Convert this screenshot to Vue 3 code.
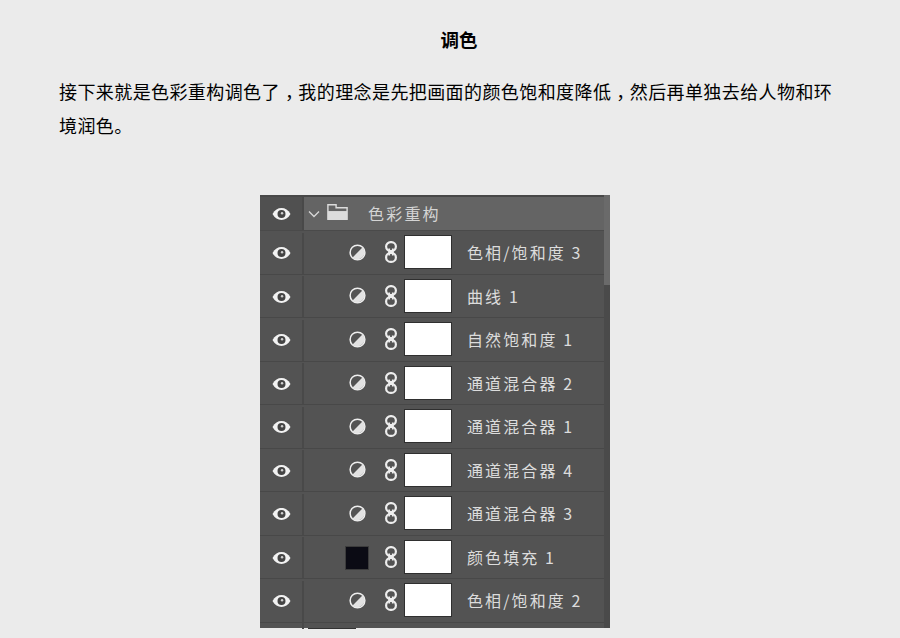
<script setup>
const layers = [
  { name: '色相/饱和度 3', type: 'adjust' },
  { name: '曲线 1', type: 'adjust' },
  { name: '自然饱和度 1', type: 'adjust' },
  { name: '通道混合器 2', type: 'adjust' },
  { name: '通道混合器 1', type: 'adjust' },
  { name: '通道混合器 4', type: 'adjust' },
  { name: '通道混合器 3', type: 'adjust' },
  { name: '颜色填充 1', type: 'fill' },
  { name: '色相/饱和度 2', type: 'adjust' },
]
</script>

<template>
  <div class="page">
    <h1 class="title">调色</h1>
    <p class="intro">接下来就是色彩重构调色了<span class="comma">，</span>我的理念是先把画面的颜色饱和度降低<span class="comma">，</span>然后再单独去给人物和环<br>境润色。</p>

    <div class="panel">
      <div class="list">
        <div class="row group">
          <div class="eye-cell">
            <svg class="eye" viewBox="0 0 20 14"><path d="M0.5 7C3 2.6 6.2 0.8 10 0.8S17 2.6 19.5 7C17 11.4 13.8 13.2 10 13.2S3 11.4 0.5 7Z" fill="#f2f2f2"/><circle cx="10" cy="7" r="4.2" fill="#444"/><circle cx="10.6" cy="6.2" r="1.3" fill="#cfcfcf"/></svg>
          </div>
          <div class="group-body">
            <svg class="chevron" viewBox="0 0 12 8"><path d="M1 1.5L6 6.5L11 1.5" fill="none" stroke="#d8d8d8" stroke-width="1.3"/></svg>
            <svg class="folder" viewBox="0 0 22 17"><path d="M0.8 16.2V0.8H9.5V4H21.2V16.2Z" fill="none" stroke="#dcdcdc" stroke-width="1.5"/><path d="M0.8 7.5H21.2V16.2H0.8Z" fill="#dcdcdc"/></svg>
            <span class="group-name">色彩重构</span>
          </div>
        </div>

        <div v-for="layer in layers" :key="layer.name" class="row">
          <div class="eye-cell">
            <svg class="eye" viewBox="0 0 20 14"><path d="M0.5 7C3 2.6 6.2 0.8 10 0.8S17 2.6 19.5 7C17 11.4 13.8 13.2 10 13.2S3 11.4 0.5 7Z" fill="#f2f2f2"/><circle cx="10" cy="7" r="4.2" fill="#444"/><circle cx="10.6" cy="6.2" r="1.3" fill="#cfcfcf"/></svg>
          </div>
          <div class="layer-body">
            <div class="type-slot">
              <svg v-if="layer.type === 'adjust'" class="adjust" viewBox="0 0 18 18"><circle cx="9" cy="9" r="7.8" fill="#535353" stroke="#efefef" stroke-width="1.6"/><path d="M14.5 3.5A7.8 7.8 0 0 1 3.5 14.5Z" fill="#e2e2e2"/></svg>
              <span v-else class="swatch"></span>
            </div>
            <svg class="link" viewBox="0 0 12 22"><g fill="none" stroke="#eeeeee" stroke-width="2.2"><rect x="1.1" y="1.1" width="9.8" height="9" rx="4.5"/><rect x="1.1" y="11.9" width="9.8" height="9" rx="4.5"/><path d="M4.2 7.5V14.5M7.8 7.5V14.5" stroke-width="1.8"/></g></svg>
            <span class="thumb"></span>
            <span class="layer-name">{{ layer.name }}</span>
          </div>
        </div>

        <div class="row-tail">
          <div class="tail-eye"></div>
          <div class="tail-body"><span class="tail-mark"></span></div>
        </div>
      </div>
      <div class="scroll"><span class="scroll-thumb"></span></div>
    </div>
  </div>
</template>

<style scoped>
.page {
  width: 900px;
  height: 638px;
  overflow: hidden;
  box-sizing: border-box;
  padding-top: 27px;
  background: #ebebeb;
  font-family: "Noto Sans CJK SC", "Liberation Sans", sans-serif;
  color: #000;
}
.title {
  margin: 0 0 0 18px;
  font-size: 18.5px;
  line-height: 24px;
  font-weight: 700;
  text-align: center;
}
.intro {
  width: 790px;
  margin: 23px 0 0 59px;
  font-size: 18px;
  line-height: 34px;
  letter-spacing: 0.41px;
}
.comma {
  padding: 0 4px 0 5px;
  font-feature-settings: "halt";
}
.panel {
  display: flex;
  width: 350px;
  height: 433px;
  margin: 53px 0 0 260px;
  background: #535353;
}
.list {
  flex: 1;
  min-width: 0;
}
.row {
  display: flex;
  box-sizing: border-box;
  height: 43.5px;
  padding-top: 1.5px;
  border-bottom: 1.5px solid #484848;
}
.row.group {
  height: 36px;
  padding-top: 0;
  border-top: 2px solid #484848;
  border-bottom: 1px solid #4a4a4a;
}
.eye-cell {
  display: flex;
  flex: none;
  align-items: center;
  justify-content: center;
  box-sizing: border-box;
  width: 44px;
  border-right: 2px solid #494949;
}
.group .eye-cell {
  background: #505050;
}
.eye {
  width: 19px;
  height: 14px;
}
.group-body {
  display: flex;
  flex: 1;
  align-items: center;
  padding-left: 4px;
  background: #646464;
}
.chevron {
  width: 12px;
  height: 8px;
}
.folder {
  width: 21px;
  height: 16px;
  margin: -3px 0 0 7px;
}
.group-name {
  margin: -1px 0 0 20px;
  font-size: 16px;
  letter-spacing: 2.2px;
  color: #d4d4d4;
}
.layer-body {
  display: flex;
  flex: 1;
  align-items: center;
}
.type-slot {
  display: flex;
  flex: none;
  justify-content: center;
  width: 24px;
  margin: -2px 0 0 41px;
}
.adjust {
  width: 17px;
  height: 17px;
}
.swatch {
  width: 24px;
  height: 24px;
  box-sizing: border-box;
  margin-top: 2px;
  background: #0b0b14;
  border: 1px solid #3c3c3c;
}
.link {
  flex: none;
  width: 12px;
  height: 22px;
  margin: -2px 0 0 16px;
}
.thumb {
  flex: none;
  box-sizing: border-box;
  width: 48px;
  height: 34px;
  margin: -2px 0 0 7px;
  background: #fff;
  border: 1px solid #2f2f2f;
}
.layer-name {
  margin: -2px 0 0 15px;
  font-size: 16px;
  letter-spacing: 2.1px;
  white-space: nowrap;
  color: #dcdcdc;
}
.row-tail {
  display: flex;
  height: 6px;
}
.tail-eye {
  box-sizing: border-box;
  width: 44px;
  border-right: 2px solid #494949;
}
.tail-body {
  position: relative;
  flex: 1;
}
.tail-mark {
  position: absolute;
  left: 4px;
  bottom: 0;
  width: 48px;
  height: 1px;
  background: #333;
}
.scroll {
  flex: none;
  width: 6px;
  background: #4a4a4a;
}
.scroll-thumb {
  display: block;
  height: 90px;
  background: #6a6a6a;
}
</style>

<style>
html, body {
  margin: 0;
  background: #ebebeb;
}
</style>
